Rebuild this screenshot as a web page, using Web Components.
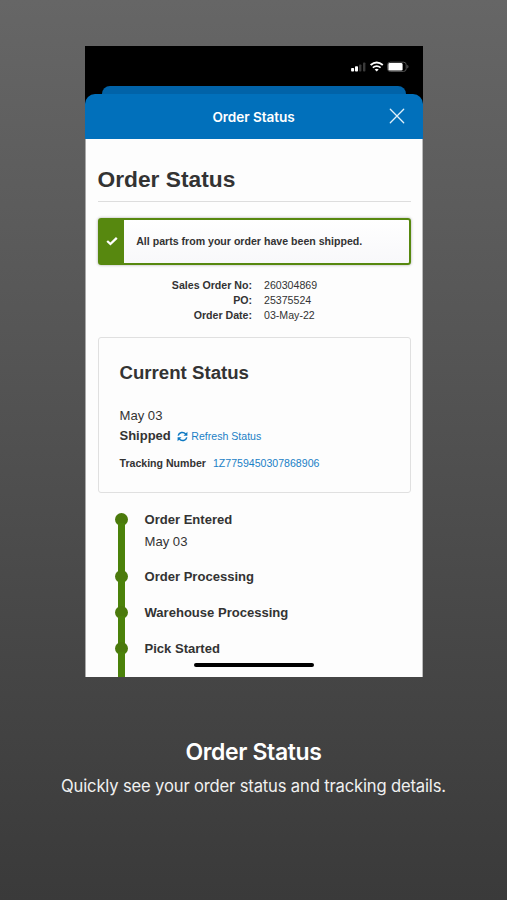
<!DOCTYPE html>
<html lang="en">
<head>
<meta charset="utf-8">
<title>Order Status</title>
<style>
html,body{margin:0;height:100%}
body{width:507px;height:900px;overflow:hidden;font-family:"Liberation Sans",Arial,sans-serif;color:#333}
</style>
</head>
<body>
<promo-page>
  <phone-screen slot="screen">
    <status-bar></status-bar>
    <nav-sheet>Order Status</nav-sheet>
    <order-content>
      <page-title>Order Status</page-title>
      <success-alert>All parts from your order have been shipped.</success-alert>
      <detail-list>
        <detail-row label="Sales Order No:">260304869</detail-row>
        <detail-row label="PO:">25375524</detail-row>
        <detail-row label="Order Date:">03-May-22</detail-row>
      </detail-list>
      <status-card heading="Current Status" date="May 03" state="Shipped" action="Refresh Status" label="Tracking Number">1Z7759450307868906</status-card>
      <time-line>
        <time-step style="--h:57px">Order Entered<span slot="date">May 03</span></time-step>
        <time-step>Order Processing</time-step>
        <time-step>Warehouse Processing</time-step>
        <time-step>Pick Started</time-step>
      </time-line>
    </order-content>
  </phone-screen>
  <promo-caption slot="caption" heading="Order Status">Quickly see your order status and tracking details.</promo-caption>
</promo-page>
<script>
const define = (name, css, html) => customElements.define(name, class extends HTMLElement {
  connectedCallback() {
    if (this.shadowRoot) return;
    const markup = typeof html === 'function' ? html(this) : html;
    this.attachShadow({mode: 'open'}).innerHTML = `<style>${css}</style>${markup}`;
  }
});

define('promo-page', `
:host{display:flex;flex-direction:column;align-items:center;box-sizing:border-box;height:900px;padding:46px 0 0 1px;background:linear-gradient(#666,#3a3a3a)}
`, '<slot name="screen"></slot><slot name="caption"></slot>');

define('phone-screen', `
:host{display:flex;flex-direction:column;position:relative;box-sizing:border-box;width:338px;height:631px;overflow:hidden;background:linear-gradient(#000 80px,#fdfdfd 80px)}
.edge{position:absolute;inset:93px 0 0 0;border-left:1px solid #aaa;border-right:1px solid #bbb;pointer-events:none}
.home{position:absolute;left:109px;bottom:10px;width:120px;height:4px;border-radius:2px;background:#000}
`, '<slot></slot><div class="edge"></div><div class="home"></div>');

define('status-bar', `
:host{display:flex;justify-content:flex-end;align-items:flex-start;box-sizing:border-box;height:40px;padding:15px 13px 0 0;background:#000}
svg{display:block}
`, `<svg width="60" height="12" viewBox="0 0 60 12">
<g fill="#fff"><rect x="1.1" y="7" width="3" height="3.6" rx=".8"/><rect x="5" y="5.3" width="3" height="5.3" rx=".8"/></g>
<g fill="#3a3a3a"><rect x="9" y="3.4" width="2.4" height="7.2" rx=".8"/><rect x="13" y="1.4" width="2.4" height="9.2" rx=".8"/></g>
<g fill="none" stroke="#fff"><path d="M20.6 4.1q6.1-5 12.2 0" stroke-width="1.9"/><path d="M22.8 6.7q3.9-3.2 7.8 0" stroke-width="1.7"/></g>
<path d="M24.7 8.4q2-1.4 4 0l-2 2.1z" fill="#fff"/>
<rect x="37.6" y="1.2" width="18.6" height="9.2" rx="2.6" fill="none" stroke="#555"/>
<rect x="38.4" y="2" width="14.2" height="7.6" rx="1.4" fill="#fff"/>
<path d="M57.6 4.2q1.2 1.5 0 3z" fill="#555" stroke="#555" stroke-width=".6"/></svg>`);

define('nav-sheet', `
:host{display:flex;flex-direction:column;background:#000}
.back{height:8px;margin:0 17px;border-radius:8px 8px 0 0;background:#0163a8}
.bar{display:grid;grid-template-columns:50px 1fr 50px;align-items:center;height:45px;border-radius:10px 10px 0 0;background:#0170bb}
.title{grid-column:2;margin-right:1px;text-align:center;font:600 13.6px/20px Inter,sans-serif;letter-spacing:-.08px;color:#fff}
svg{display:block;margin:-2px 0 0 16px}
`, `<div class="back"></div><div class="bar"><span class="title"><slot></slot></span>
<svg width="16" height="16" viewBox="0 0 16 16"><path d="M1.3 1.3 14.7 14.7M14.7 1.3 1.3 14.7" stroke="#e2f1fa" stroke-width="1.3" stroke-linecap="round"/></svg></div>`);

define('order-content', `
:host{display:flex;flex-direction:column;flex:1;padding:25px 12.5px 0 12.5px;background:#fdfdfd}
`, '<slot></slot>');

define('page-title', `
:host{display:block;height:37px;border-bottom:1px solid #ddd;font-weight:700;font-size:22.75px;line-height:30px;color:#333}
`, '<slot></slot>');

define('success-alert', `
:host{display:flex;box-sizing:border-box;height:47px;margin-top:16px;border:2px solid #57880f;border-radius:3px;background:linear-gradient(#fff,#f8f8fa);box-shadow:0 0 3px #0005}
.mark{display:flex;align-items:center;justify-content:center;width:24px;background:#57880f}
.mark svg{margin-top:-2px}
.text{padding-left:12.7px;font-weight:700;font-size:10.6px;line-height:42px}
`, `<div class="mark"><svg width="12" height="10" viewBox="0 0 12 10"><path d="M1.2 5 4.4 8 10.8 1.8" fill="none" stroke="#fff" stroke-width="2.3"/></svg></div><div class="text"><slot></slot></div>`);

define('detail-list', `
:host{display:flex;flex-direction:column;padding:13px 0 0}
`, '<slot></slot>');

define('detail-row', `
:host{display:grid;grid-template-columns:154.5px 1fr;column-gap:12px;font-size:10.62px;line-height:14.8px}
b{text-align:right}
`, el => `<b>${el.getAttribute('label')}</b><span><slot></slot></span>`);

define('status-card', `
:host{display:block;box-sizing:border-box;height:156px;margin-top:14.6px;padding:22px 21px 0;border:1px solid #e0e0e0;border-radius:3px}
h2{margin:0;font-size:18.65px;line-height:26px}
.date{margin-top:20.4px;font-size:13.1px;line-height:20px}
.line{display:flex;align-items:center;font-size:13px;line-height:20px}
.link{color:#1a7fc6;font-size:10.58px}
svg{margin:1px 3.5px 0 6px}
.track{display:flex;gap:7px;margin-top:8px;font-size:10.58px;line-height:18px}
`, el => {
  const a = n => el.getAttribute(n);
  return `<h2>${a('heading')}</h2><div class="date">${a('date')}</div>
<div class="line"><b>${a('state')}</b><svg width="11" height="11" viewBox="0 0 11 11"><g fill="none" stroke="#0c78c2" stroke-width="1.5"><path d="M1.2 4.7C2 1.2 6.3.3 8.7 2.9M9.8 6.3C9 9.8 4.7 10.7 2.3 8.1"/></g><path d="M10.4.8v3.9H6.5zM.6 10.2V6.3h3.9z" fill="#0c78c2"/></svg><span class="link">${a('action')}</span></div>
<div class="track"><b>${a('label')}</b><span class="link"><slot></slot></span></div>`;
});

define('time-line', `
:host{display:flex;flex-direction:column;padding:17.4px 0 0 17.5px}
`, '<slot></slot>');

define('time-step', `
:host{display:grid;grid-template-columns:13px 1fr;column-gap:16.5px;flex:none;height:var(--h,36px)}
.rail{display:flex;flex-direction:column;align-items:center;padding-top:2.7px}
.dot{flex:none;width:13px;height:13px;border-radius:50%;background:#4b7a0c}
.bar{flex:none;width:6.5px;height:calc(var(--h,36px) - 6px);margin-top:-3px;background:#4b820a}
.name{font-weight:700;font-size:13.05px;line-height:20px}
.date{font-size:13.1px;line-height:20px;margin-top:2px}
`, '<div class="rail"><div class="dot"></div><div class="bar"></div></div><div><div class="name"><slot></slot></div><div class="date"><slot name="date"></slot></div></div>');

define('promo-caption', `
:host{display:flex;flex-direction:column;align-items:center;padding:60px 1px 0 0;font-family:Inter,sans-serif;color:#fff;white-space:nowrap}
.h{font-weight:600;font-size:23px;line-height:30px;letter-spacing:-.35px}
.p{margin-top:7px;font-size:16.6px;line-height:24px;letter-spacing:-.16px;color:#f0f0f0}
`, el => `<div class="h">${el.getAttribute('heading')}</div><div class="p"><slot></slot></div>`);
</script>
</body>
</html>
